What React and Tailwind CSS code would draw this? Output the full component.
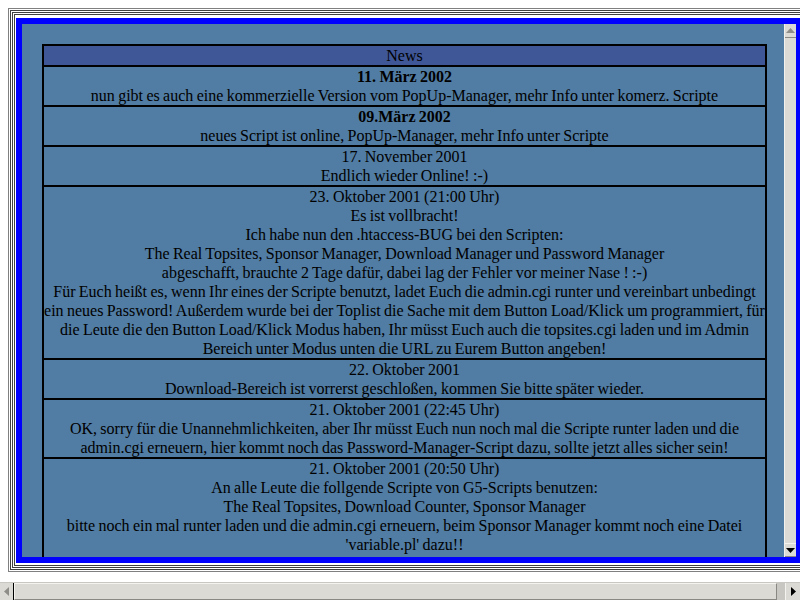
export default function App() {
  const rows = [
    { head: "11. März 2002", bold: true, lines: ["nun gibt es auch eine kommerzielle Version vom PopUp-Manager, mehr Info unter komerz. Scripte"] },
    { head: "09.März 2002", bold: true, lines: ["neues Script ist online, PopUp-Manager, mehr Info unter Scripte"] },
    { head: "17. November 2001", lines: ["Endlich wieder Online! :-)"] },
    {
      head: "23. Oktober 2001 (21:00 Uhr)",
      lines: [
        "Es ist vollbracht!",
        "Ich habe nun den .htaccess-BUG bei den Scripten:",
        "The Real Topsites, Sponsor Manager, Download Manager und Password Manager",
        "abgeschafft, brauchte 2 Tage dafür, dabei lag der Fehler vor meiner Nase ! :-)",
        "Für Euch heißt es, wenn Ihr eines der Scripte benutzt, ladet Euch die admin.cgi runter und vereinbart unbedingt",
        "ein neues Password! Außerdem wurde bei der Toplist die Sache mit dem Button Load/Klick um programmiert, für",
        "die Leute die den Button Load/Klick Modus haben, Ihr müsst Euch auch die topsites.cgi laden und im Admin",
        "Bereich unter Modus unten die URL zu Eurem Button angeben!",
      ],
    },
    { head: "22. Oktober 2001", lines: ["Download-Bereich ist vorrerst geschloßen, kommen Sie bitte später wieder."] },
    {
      head: "21. Oktober 2001 (22:45 Uhr)",
      lines: [
        "OK, sorry für die Unannehmlichkeiten, aber Ihr müsst Euch nun noch mal die Scripte runter laden und die",
        "admin.cgi erneuern, hier kommt noch das Password-Manager-Script dazu, sollte jetzt alles sicher sein!",
      ],
    },
    {
      head: "21. Oktober 2001 (20:50 Uhr)",
      lines: [
        "An alle Leute die follgende Scripte von G5-Scripts benutzen:",
        "The Real Topsites, Download Counter, Sponsor Manager",
        "bitte noch ein mal runter laden und die admin.cgi erneuern, beim Sponsor Manager kommt noch eine Datei",
        "'variable.pl' dazu!!",
      ],
    },
  ];

  return (
    <div className="w-[800px] h-[600px] bg-white overflow-hidden flex flex-col font-['Liberation_Serif',serif] text-[16px] leading-[19px] text-black">
      {/* page area */}
      <div className="h-[582px] shrink-0 overflow-hidden pt-[8px] pl-[8px]">
        <div className="w-[900px] h-[564px] border border-[#808080] p-px">
          <div className="h-full border border-[#404040] p-px">
            <div className="h-full border border-[#404040] p-px">
              <div className="h-full border border-[#404040] pl-[1px] pt-[3px] pb-[2px]">
                {/* news frame */}
                <div className="w-[786px] h-full border-[6px] border-[#0000ff] flex">
                  <div className="flex-1 bg-[#517ca3] overflow-hidden pl-[20px] pt-[20px]">
                    <div className="w-[725px] border-2 border-black text-center [word-spacing:-0.65px]">
                      <div className="h-[19px] bg-[#3f5797]">News</div>
                      {rows.map((r, i) => (
                        <div key={i} className={"border-t-2 border-black whitespace-nowrap" + (i === rows.length - 1 ? " pb-[40px]" : "")}>
                          <div className={r.bold ? "font-bold" : ""}>{r.head}</div>
                          {r.lines.map((l, j) => (
                            <div key={j}>{l}</div>
                          ))}
                        </div>
                      ))}
                    </div>
                  </div>
                  {/* vertical scrollbar */}
                  <div className="w-[12px] shrink-0 bg-[#dcdad5] border-l border-[#f2f1ee] flex flex-col">
                    <div className="h-[14px] border-b border-[#8a8883] flex items-center justify-center">
                      <svg width="9" height="5" viewBox="0 0 9 5"><polygon points="0,5 9,5 4.5,0" fill="#8f8d88" /></svg>
                    </div>
                    <div className="flex-1" />
                    <div className="h-[14px] border-t border-[#f4f3f0] border-b border-b-[#8a8883] flex items-center justify-center">
                      <svg width="9" height="5" viewBox="0 0 9 5"><polygon points="0,0 9,0 4.5,5" fill="#000" /></svg>
                    </div>
                  </div>
                </div>
              </div>
            </div>
          </div>
        </div>
      </div>
      {/* horizontal scrollbar */}
      <div className="h-[18px] shrink-0 bg-[#dcdad5] border-t border-[#c9c7c2] flex items-stretch">
        <div className="w-[14px] border-r border-black flex items-center justify-center">
          <svg width="5" height="9" viewBox="0 0 5 9"><polygon points="5,0 5,9 0,4.5" fill="#8f8d88" /></svg>
        </div>
        <div className="w-[763px] bg-[#dcdad5] border border-[#8a8883] border-l-[#f4f3f0] border-t-[#f4f3f0]" />
        <div className="w-[8px] bg-[#c9c7c2]" />
        <div className="flex-1 border-l border-[#f4f3f0] flex items-center justify-center">
          <svg width="5" height="9" viewBox="0 0 5 9"><polygon points="0,0 0,9 5,4.5" fill="#000" /></svg>
        </div>
      </div>
    </div>
  );
}
